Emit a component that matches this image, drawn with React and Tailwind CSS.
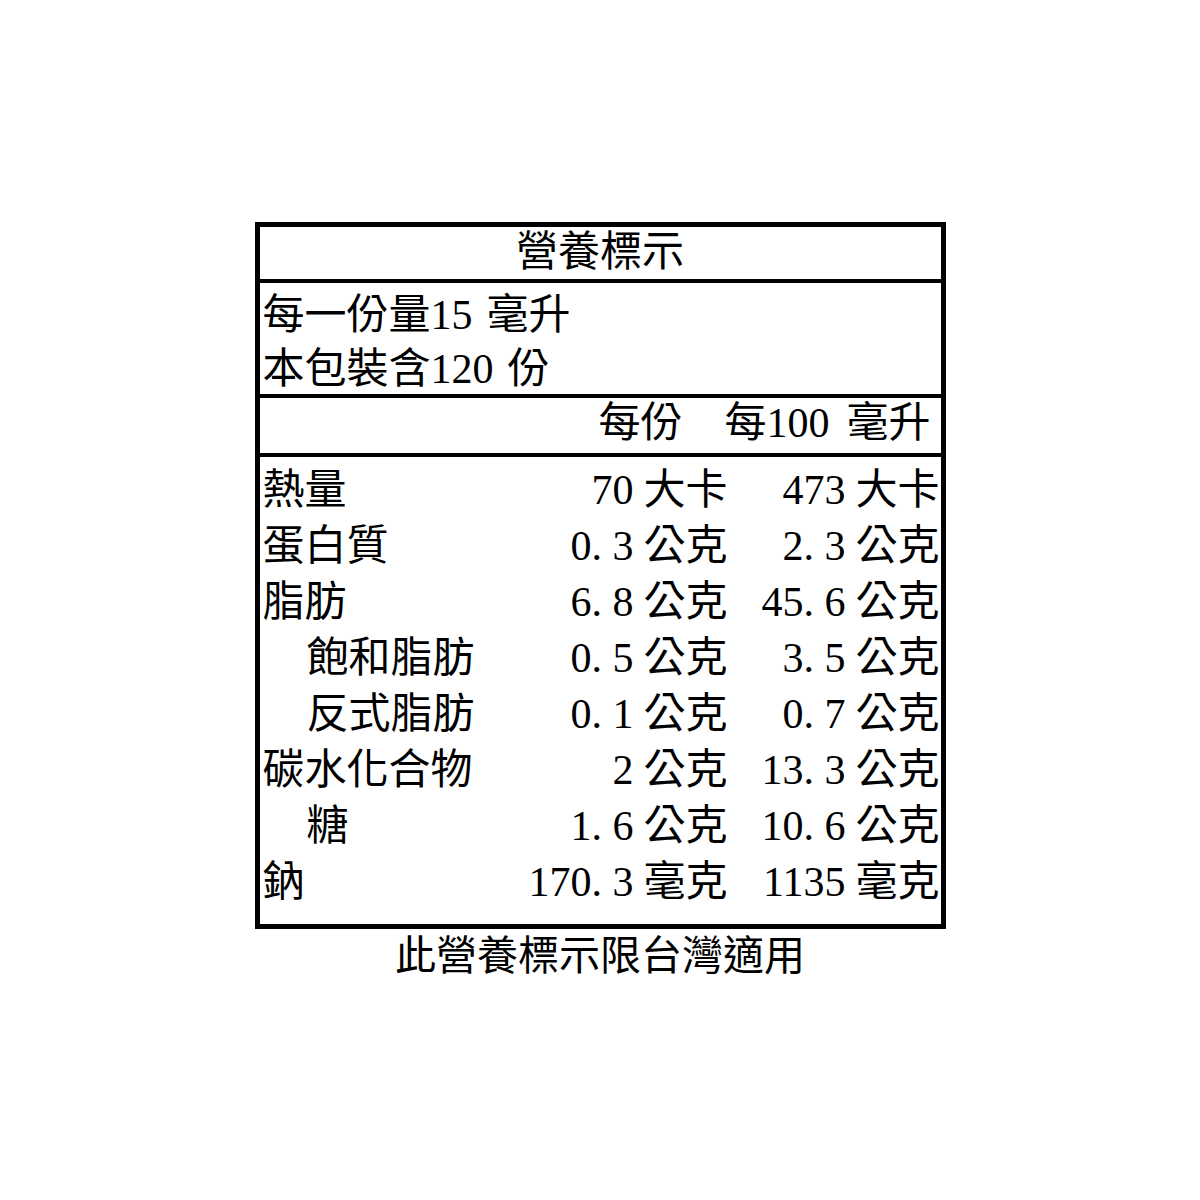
import React from 'react';

const rows = [
  { name: '熱量', a: '70', au: '大卡', b: '473', bu: '大卡' },
  { name: '蛋白質', a: '0.3', au: '公克', b: '2.3', bu: '公克' },
  { name: '脂肪', a: '6.8', au: '公克', b: '45.6', bu: '公克' },
  { name: '飽和脂肪', indent: true, a: '0.5', au: '公克', b: '3.5', bu: '公克' },
  { name: '反式脂肪', indent: true, a: '0.1', au: '公克', b: '0.7', bu: '公克' },
  { name: '碳水化合物', a: '2', au: '公克', b: '13.3', bu: '公克' },
  { name: '糖', indent: true, a: '1.6', au: '公克', b: '10.6', bu: '公克' },
  { name: '鈉', a: '170.3', au: '毫克', b: '1135', bu: '毫克' },
];

// half-width period, like the label's Ming font
function Num({ value }) {
  const [int, dec] = value.split('.');
  return (
    <span>
      {int}
      {dec !== undefined && (
        <>
          <span className="inline-block w-[0.5em] text-left">.</span>
          {dec}
        </>
      )}
    </span>
  );
}

export default function App() {
  return (
    <div
      className="min-h-[1200px] bg-white text-[42px] text-black pt-[222px]"
      style={{ fontFamily: '"Liberation Serif", "Noto Sans CJK TC", serif' }}
    >
      <div className="mx-auto w-[691px] border-[5px] border-black">
        {/* Title */}
        <div className="h-[56px] flex items-center justify-center border-b-4 border-black leading-none pb-[2px]">
          營養標示
        </div>

        {/* Serving */}
        <div className="h-[115px] pl-[3px] pt-[5px] leading-[54px] border-b-4 border-black">
          <div>
            每一份量15<span className="ml-[14px]">毫升</span>
          </div>
          <div>
            本包裝含120<span className="ml-[14px]">份</span>
          </div>
        </div>

        {/* Column headings */}
        <div className="h-[59px] flex items-center justify-end pr-[10px] gap-[42px] leading-none pb-[6px] border-b-4 border-black">
          <span>每份</span>
          <span>
            每100<span className="ml-[17px]">毫升</span>
          </span>
        </div>

        {/* Nutrients */}
        <div className="pt-[5px] pb-[14px] pl-[3px]">
          {rows.map((r) => (
            <div
              key={r.name}
              className="grid grid-cols-[1fr_143px_84px_128px_85px] h-[56px] items-center leading-none"
            >
              <span className={r.indent ? 'pl-[44px]' : ''}>{r.name}</span>
              <span className="text-right pr-[10px]">
                <Num value={r.a} />
              </span>
              <span>{r.au}</span>
              <span className="text-right pr-[10px]">
                <Num value={r.b} />
              </span>
              <span>{r.bu}</span>
            </div>
          ))}
        </div>
      </div>

      <div className="text-center mt-[7px] leading-none text-[41px]">此營養標示限台灣適用</div>
    </div>
  );
}
